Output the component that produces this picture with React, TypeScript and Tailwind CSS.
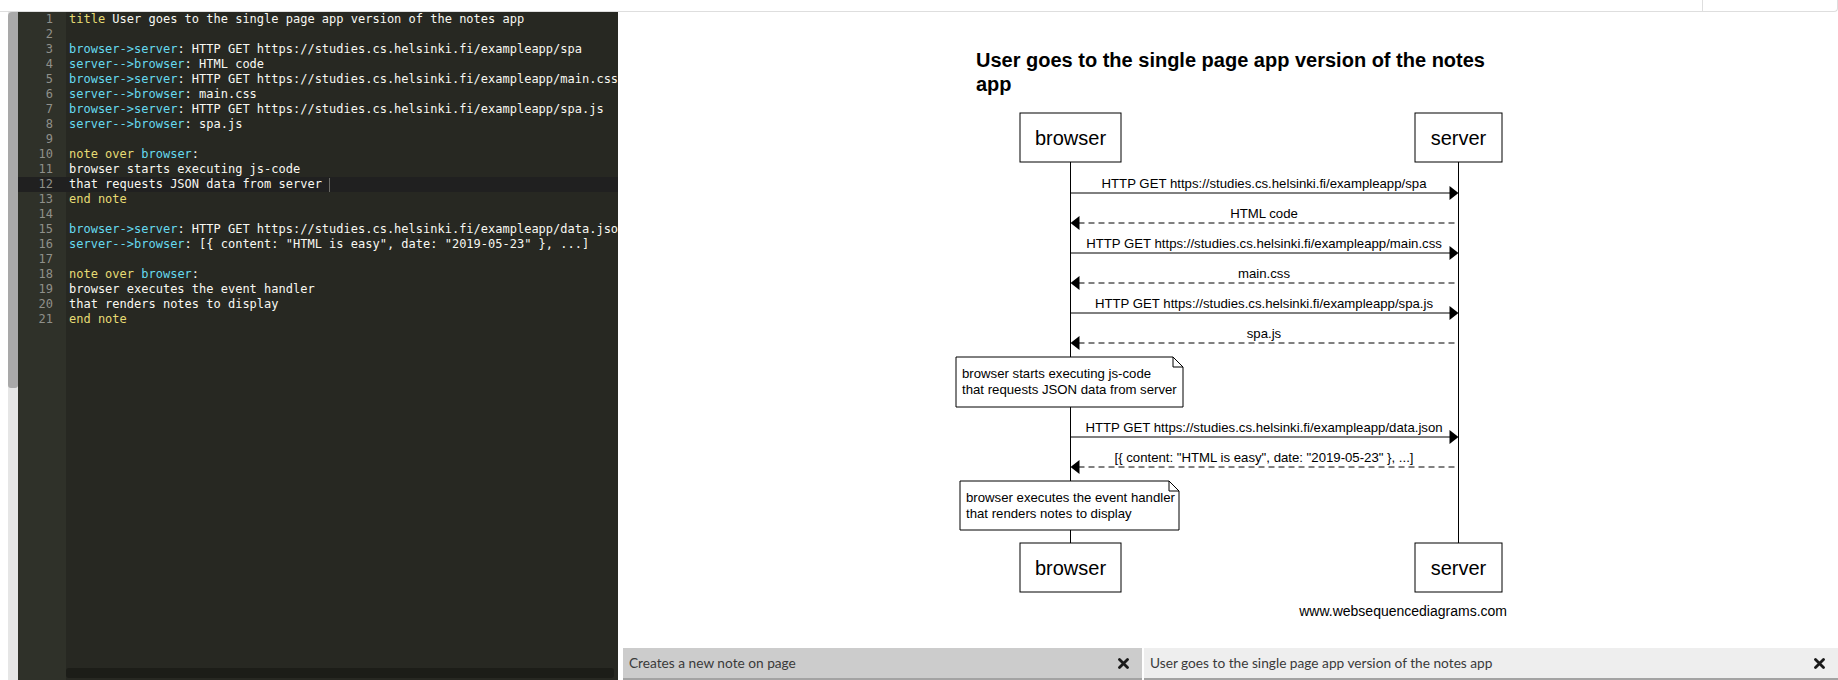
import React from 'react'

const MONO = { fontFamily: '"DejaVu Sans Mono", "Liberation Mono", monospace' }

// each line is a list of [text, colour] parts
const Y = 'text-[#e6db74]'
const C = 'text-[#66d9ef]'
const W = 'text-[#f8f8f2]'

const lines: [string, string][][] = [
  [['title', Y], [' User goes to the single page app version of the notes app', W]],
  [],
  [['browser->server', C], [': HTTP GET https://studies.cs.helsinki.fi/exampleapp/spa', W]],
  [['server-->browser', C], [': HTML code', W]],
  [['browser->server', C], [': HTTP GET https://studies.cs.helsinki.fi/exampleapp/main.css', W]],
  [['server-->browser', C], [': main.css', W]],
  [['browser->server', C], [': HTTP GET https://studies.cs.helsinki.fi/exampleapp/spa.js', W]],
  [['server-->browser', C], [': spa.js', W]],
  [],
  [['note over', Y], [' ', W], ['browser', C], [':', W]],
  [['browser starts executing js-code', W]],
  [['that requests JSON data from server ', W]],
  [['end note', Y]],
  [],
  [['browser->server', C], [': HTTP GET https://studies.cs.helsinki.fi/exampleapp/data.json', W]],
  [['server-->browser', C], [': [{ content: "HTML is easy", date: "2019-05-23" }, ...]', W]],
  [],
  [['note over', Y], [' ', W], ['browser', C], [':', W]],
  [['browser executes the event handler', W]],
  [['that renders notes to display', W]],
  [['end note', Y]],
]

const ACTIVE = 11

function Editor() {
  return (
    <div className="w-[600px] flex bg-[#272822] text-[12px] leading-[15px]" style={MONO}>
      <div className="w-[48px] bg-[#2f3129] text-[#8f908a]">
        {lines.map((_, i) => (
          <div key={i} className={`h-[15px] pr-[13px] text-right ${i === ACTIVE ? 'bg-[#202020]' : ''}`}>{i + 1}</div>
        ))}
      </div>
      <div className="flex-1 min-w-0 flex flex-col">
        <div className="flex-1 overflow-hidden">
          {lines.map((parts, i) => (
            <div key={i} className={`h-[15px] pl-[3px] whitespace-pre overflow-hidden flex items-center ${i === ACTIVE ? 'bg-[#202020]' : ''}`}>
              {parts.map(([t, c], j) => <span key={j} className={c}>{t}</span>)}
              {i === ACTIVE && <span className="w-px h-[14px] bg-[#6b6b66]" />}
            </div>
          ))}
        </div>
        <div className="h-[12px] pr-[4px] pb-[2px] flex">
          <div className="flex-1 bg-[#1c1d18] rounded-[3px]" />
        </div>
      </div>
    </div>
  )
}

const SANS = '"Liberation Sans", Arial, sans-serif'
const BX = 1070.5
const SX = 1458.5

function Msg({ y, label, back }: { y: number; label: string; back?: boolean }) {
  return (
    <g>
      <text x={1264} y={y - 5} textAnchor="middle" fontSize={13.2} fill="#000">{label}</text>
      {back ? (
        <>
          <line x1={BX + 8} y1={y} x2={SX} y2={y} stroke="#000" strokeDasharray="6 4" />
          <polygon points={`${BX},${y} ${BX + 9},${y - 7} ${BX + 9},${y + 7}`} fill="#000" />
        </>
      ) : (
        <>
          <line x1={BX} y1={y} x2={SX - 8} y2={y} stroke="#000" />
          <polygon points={`${SX},${y} ${SX - 9},${y - 7} ${SX - 9},${y + 7}`} fill="#000" />
        </>
      )}
    </g>
  )
}

function Note({ x, y, w, h, a, b, tx }: { x: number; y: number; w: number; h: number; a: string; b: string; tx: number }) {
  const r = x + w
  return (
    <g>
      <path d={`M${x},${y} H${r - 10} L${r},${y + 10} V${y + h} H${x} Z`} fill="#fff" stroke="#000" />
      <path d={`M${r - 10},${y} V${y + 10} H${r}`} fill="none" stroke="#000" />
      <text x={tx} y={y + 21} fontSize={13.2}>{a}</text>
      <text x={tx} y={y + 37} fontSize={13.2}>{b}</text>
    </g>
  )
}

function Actor({ x, y, w, label }: { x: number; y: number; w: number; label: string }) {
  return (
    <g>
      <rect x={x} y={y} width={w} height={49} fill="#fff" stroke="#000" />
      <text x={x + w / 2} y={y + 32} textAnchor="middle" fontSize={20}>{label}</text>
    </g>
  )
}

function Diagram() {
  return (
    <svg width={560} height={590} viewBox="950 40 560 590" style={{ fontFamily: SANS }} className="ml-[332px] mt-[28px] block">
      <text x={976} y={67} fontSize={20} fontWeight="bold">User goes to the single page app version of the notes</text>
      <text x={976} y={91} fontSize={20} fontWeight="bold">app</text>
      <line x1={BX} y1={162} x2={BX} y2={543} stroke="#000" />
      <line x1={SX} y1={162} x2={SX} y2={543} stroke="#000" />
      <Actor x={1020} y={113} w={101} label="browser" />
      <Actor x={1415} y={113} w={87} label="server" />
      <Msg y={193} label="HTTP GET https://studies.cs.helsinki.fi/exampleapp/spa" />
      <Msg y={223} label="HTML code" back />
      <Msg y={253} label="HTTP GET https://studies.cs.helsinki.fi/exampleapp/main.css" />
      <Msg y={283} label="main.css" back />
      <Msg y={313} label="HTTP GET https://studies.cs.helsinki.fi/exampleapp/spa.js" />
      <Msg y={343} label="spa.js" back />
      <Note x={956} y={357} w={227} h={50} tx={962} a="browser starts executing js-code" b="that requests JSON data from server" />
      <Msg y={437} label="HTTP GET https://studies.cs.helsinki.fi/exampleapp/data.json" />
      <Msg y={467} label={'[{ content: "HTML is easy", date: "2019-05-23" }, ...]'} back />
      <Note x={960} y={481} w={219} h={49} tx={966} a="browser executes the event handler" b="that renders notes to display" />
      <Actor x={1020} y={543} w={101} label="browser" />
      <Actor x={1415} y={543} w={87} label="server" />
      <text x={1507} y={616} textAnchor="end" fontSize={14}>www.websequencediagrams.com</text>
    </svg>
  )
}

function Close() {
  return (
    <svg width="11" height="11" viewBox="0 0 11 11" className="shrink-0">
      <path d="M1.5 1.5 L9.5 9.5 M9.5 1.5 L1.5 9.5" stroke="#1a1a1a" strokeWidth="2.8" strokeLinecap="round" />
    </svg>
  )
}

function Tabs() {
  const lato = { fontFamily: 'Lato, "Open Sans", sans-serif' }
  return (
    <div className="h-[32px] flex pl-[5px] gap-[2px] text-[13.7px] text-[#3a3a3a]" style={lato}>
      <div className="w-[519px] bg-[#cccccc] border-b-2 border-[#a3a3a3] flex items-center justify-between pl-[6px] pr-[13px]">
        <span>Creates a new note on page</span>
        <Close />
      </div>
      <div className="flex-1 bg-[#eeeeee] border-b-2 border-[#a3a3a3] flex items-center justify-between pl-[6px] pr-[13px]">
        <span>User goes to the single page app version of the notes app</span>
        <Close />
      </div>
    </div>
  )
}

export default function App() {
  return (
    <div className="w-[1838px] h-[680px] bg-white flex flex-col overflow-hidden">
      <div className="h-[12px] flex shrink-0">
        <div className="flex-1 border-b border-[#dedede]" />
        <div className="w-[136px] border-l border-b border-r border-[#dedede] rounded-br-[4px]" />
      </div>
      <div className="flex flex-1 min-h-0">
        <div className="w-[8px]" />
        <div className="w-[10px] bg-[#e6e6e6] flex flex-col">
          <div className="h-[376px] bg-[#a9a9a9] rounded-tl-[4px] rounded-b-[3px]" />
        </div>
        <Editor />
        <div className="flex-1 flex flex-col">
          <div className="flex-1">
            <Diagram />
          </div>
          <Tabs />
        </div>
      </div>
    </div>
  )
}
